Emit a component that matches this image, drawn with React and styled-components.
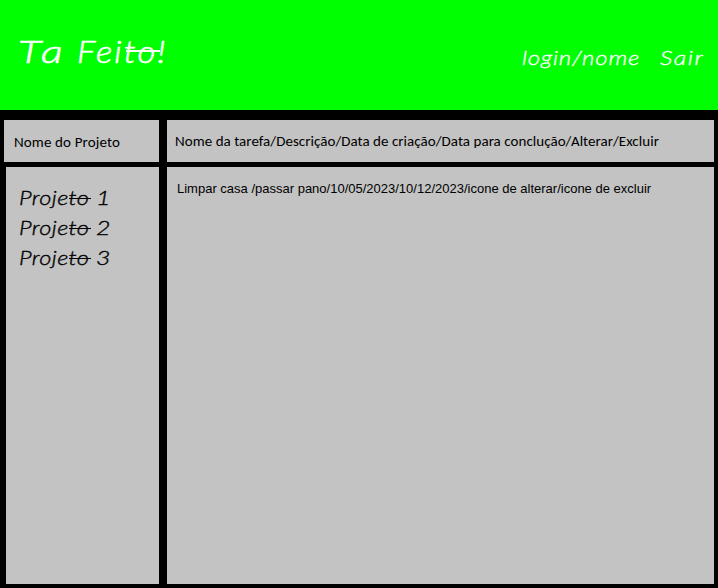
import React from "react";
import styled, { createGlobalStyle } from "styled-components";

const GlobalStyle = createGlobalStyle`
  * { box-sizing: border-box; }
  body { margin: 0; background: #000; }
`;

const Page = styled.div`
  width: 718px;
  height: 588px;
  display: flex;
  flex-direction: column;
  background: #000;
  color: #000;
  overflow: hidden;
`;

const Header = styled.header`
  height: 110px;
  flex: none;
  display: flex;
  justify-content: space-between;
  background: #00ff00;
  color: #fff;
`;

const Script = styled.span`
  display: flex;
  white-space: pre;
  font-family: "Segoe Script", Lato, sans-serif;
  font-style: italic;
  font-weight: 300;
  -webkit-text-stroke: 0.35px currentColor;
`;

const Word = styled.span`
  position: relative;
  display: block;
  width: ${(p) => p.$width}px;
`;

/* Stretches the letters to the broad proportions of handwriting. */
const Letters = styled.span`
  display: inline-block;
  transform: scaleX(${(p) => p.$stretch});
  transform-origin: 0 50%;
  letter-spacing: ${(p) => p.$spacing}px;
`;

/* Long crossbar of the handwritten "t", running on through the next letter. */
const CrossBar = styled.i`
  position: absolute;
  left: ${(p) => p.$left}px;
  top: ${(p) => p.$top}px;
  width: ${(p) => p.$width}px;
  height: ${(p) => p.$thickness}px;
  background: currentColor;
`;

const Brand = styled(Script).attrs({ as: "h1" })`
  margin: 31px 0 0 18px;
  font-size: 31px;
  line-height: 40px;
  -webkit-text-stroke-width: 0.6px;
`;

const Account = styled.nav`
  display: flex;
  margin-top: 45px;
`;

const AccountLink = styled(Script)`
  font-size: 20px;
  line-height: 24px;
`;

const Board = styled.main`
  flex: 1;
  display: grid;
  grid-template-columns: 155px 547px;
  grid-template-rows: 42px 417px;
  column-gap: 8px;
  row-gap: 5px;
  padding: 10px 4px 4px;
`;

const Panel = styled.section`
  background: #c3c3c3;
  white-space: nowrap;
  overflow: hidden;
`;

const ColumnTitle = styled(Panel)`
  padding: ${(p) => p.$pad};
  font: 15px/20px Calibri, Carlito, Lato, sans-serif;
  letter-spacing: ${(p) => p.$spacing}px;
`;

const ProjectPanel = styled(Panel)`
  margin-left: 2px;
  padding: 15px 0 0 13px;
`;

const Project = styled(Script)`
  height: 30px;
  font-size: 20px;
  line-height: 30px;
`;

const TaskPanel = styled(Panel)`
  padding: 13px 0 0 10px;
  font: 13px/18px "Liberation Sans", Arial, sans-serif;
`;

const Task = styled.div`
  letter-spacing: 0;
`;

export default function App() {
  return (
    <>
      <GlobalStyle />
      <Page>
        <Header>
          <Brand>
            <Word $width={59}>
              <Letters $stretch={1.4} $spacing={3.4}>Ta</Letters>
            </Word>
            <Word $width={92}>
              <Letters $stretch={1.12} $spacing={1.9}>Feito!</Letters>
              <CrossBar $left={49} $top={19} $width={34} $thickness={2} />
            </Word>
          </Brand>
          <Account>
            <AccountLink>
              <Word $width={138}>
                <Letters $stretch={1.2} $spacing={0.7}>login/nome</Letters>
              </Word>
            </AccountLink>
            <AccountLink>
              <Word $width={58}>
                <Letters $stretch={1.25} $spacing={1.2}>Sair</Letters>
              </Word>
            </AccountLink>
          </Account>
        </Header>
        <Board>
          <ColumnTitle $pad="12px 0 0 10px" $spacing={0.13}>Nome do Projeto</ColumnTitle>
          <ColumnTitle $pad="11px 0 0 8px" $spacing={0.04}>
            Nome da tarefa/Descrição/Data de criação/Data para conclução/Alterar/Excluir
          </ColumnTitle>
          <ProjectPanel>
            {[1, 2, 3].map((n) => (
              <Project key={n}>
                <Word $width={77}>
                  <Letters $stretch={1.18} $spacing={0.3}>Projeto</Letters>
                  <CrossBar $left={50} $top={16} $width={22} $thickness={1} />
                </Word>
                <Word $width={16}>
                  <Letters $stretch={1.25} $spacing={0}>{n}</Letters>
                </Word>
              </Project>
            ))}
          </ProjectPanel>
          <TaskPanel>
            <Task>Limpar casa /passar pano/10/05/2023/10/12/2023/icone de alterar/icone de excluir</Task>
          </TaskPanel>
        </Board>
      </Page>
    </>
  );
}
